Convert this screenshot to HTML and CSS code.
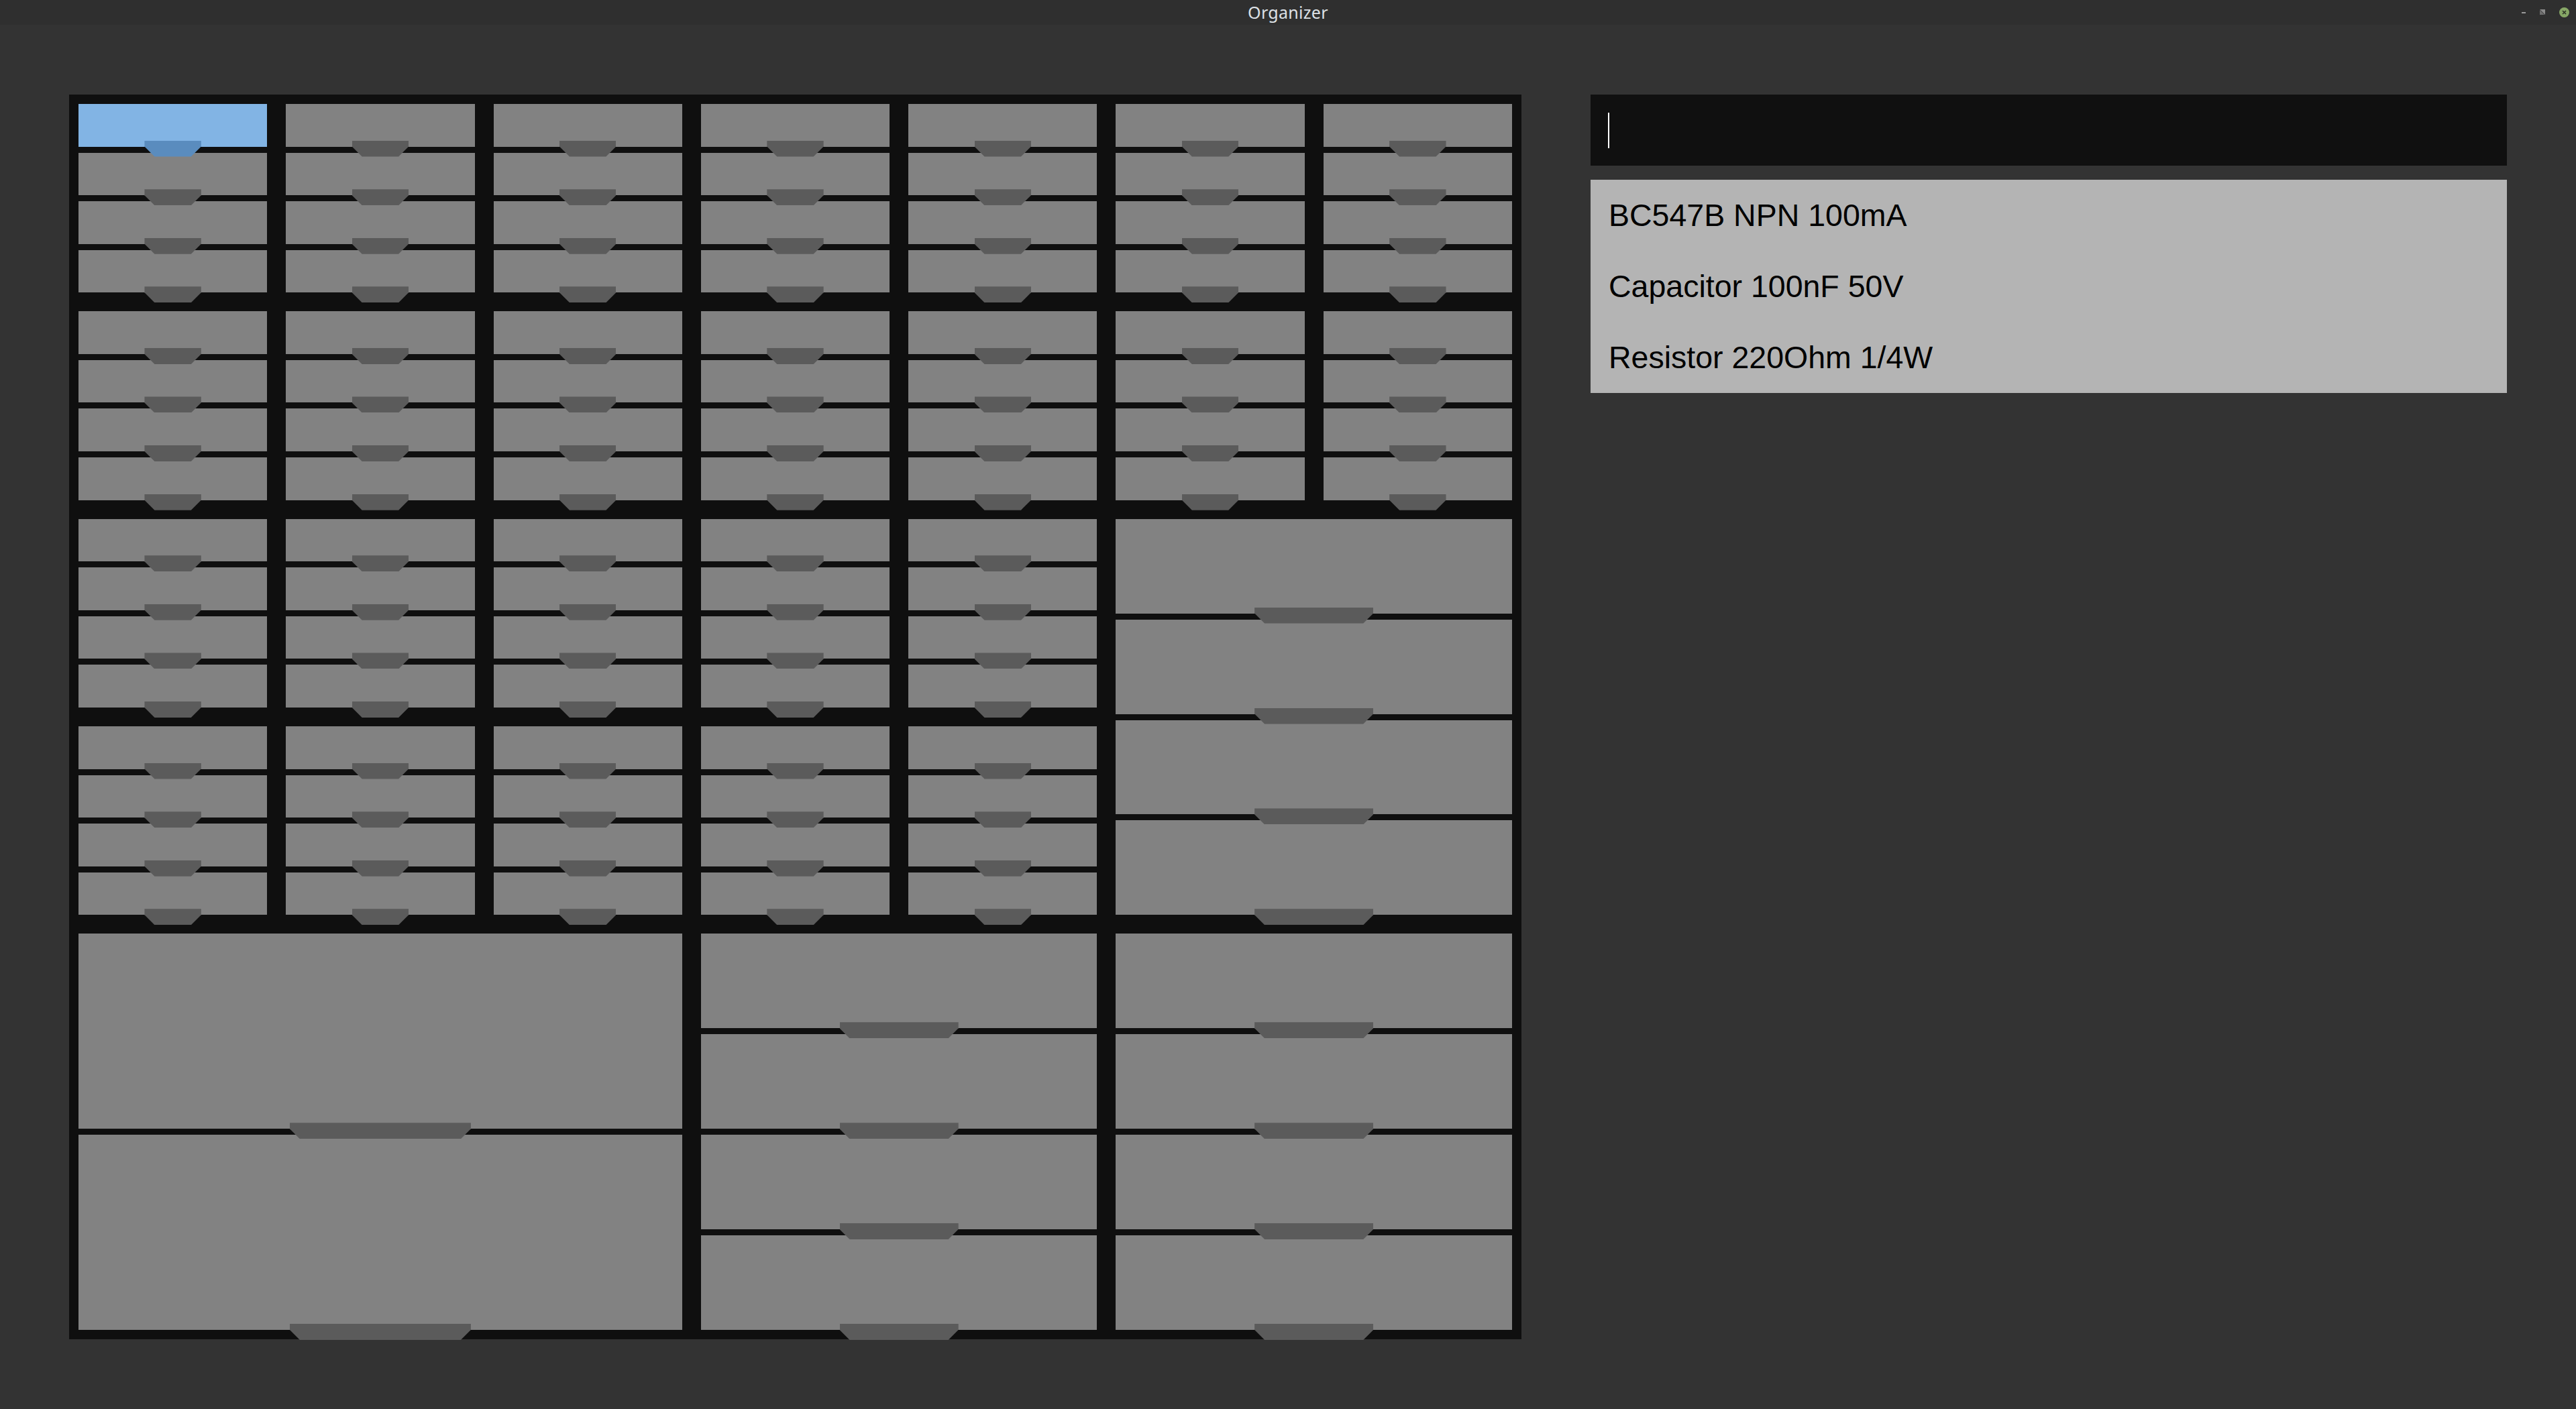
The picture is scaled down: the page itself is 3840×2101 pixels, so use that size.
FILE: index.html
```html
<!DOCTYPE html>
<html>
<head>
	<meta charset="utf-8">
	<meta name="viewport" content="width=device-width, initial-scale=1">
	<title>Organizer</title>
	<link rel="stylesheet" href="styles.css">
</head>
<body>
	<div class="titlebar">
		<span class="title">Organizer</span>
		<div class="controls">
			<span class="btn-min"></span>
			<svg class="btn-max" width="8" height="8" viewBox="0 0 8 8"><path d="M0 0H8V8Z" fill="#8a8a8a"/><path d="M0 1V8H7Z" fill="#6e6e6e"/></svg>
			<svg class="btn-close" width="15" height="15" viewBox="0 0 15 15"><circle cx="7.5" cy="7.5" r="7.5" fill="#87a766"/><path d="M5 5L10 10M10 5L5 10" stroke="#2d3327" stroke-width="1.6"/></svg>
		</div>
	</div>

	<main class="main">
		<div class="cabinet">
			<!-- row 1 -->
			<div class="cell"><div class="drawer selected"></div><div class="drawer"></div><div class="drawer"></div><div class="drawer"></div></div>
			<div class="cell"><div class="drawer"></div><div class="drawer"></div><div class="drawer"></div><div class="drawer"></div></div>
			<div class="cell"><div class="drawer"></div><div class="drawer"></div><div class="drawer"></div><div class="drawer"></div></div>
			<div class="cell"><div class="drawer"></div><div class="drawer"></div><div class="drawer"></div><div class="drawer"></div></div>
			<div class="cell"><div class="drawer"></div><div class="drawer"></div><div class="drawer"></div><div class="drawer"></div></div>
			<div class="cell"><div class="drawer"></div><div class="drawer"></div><div class="drawer"></div><div class="drawer"></div></div>
			<div class="cell"><div class="drawer"></div><div class="drawer"></div><div class="drawer"></div><div class="drawer"></div></div>
			<!-- row 2 -->
			<div class="cell"><div class="drawer"></div><div class="drawer"></div><div class="drawer"></div><div class="drawer"></div></div>
			<div class="cell"><div class="drawer"></div><div class="drawer"></div><div class="drawer"></div><div class="drawer"></div></div>
			<div class="cell"><div class="drawer"></div><div class="drawer"></div><div class="drawer"></div><div class="drawer"></div></div>
			<div class="cell"><div class="drawer"></div><div class="drawer"></div><div class="drawer"></div><div class="drawer"></div></div>
			<div class="cell"><div class="drawer"></div><div class="drawer"></div><div class="drawer"></div><div class="drawer"></div></div>
			<div class="cell"><div class="drawer"></div><div class="drawer"></div><div class="drawer"></div><div class="drawer"></div></div>
			<div class="cell"><div class="drawer"></div><div class="drawer"></div><div class="drawer"></div><div class="drawer"></div></div>
			<!-- row 3 -->
			<div class="cell"><div class="drawer"></div><div class="drawer"></div><div class="drawer"></div><div class="drawer"></div></div>
			<div class="cell"><div class="drawer"></div><div class="drawer"></div><div class="drawer"></div><div class="drawer"></div></div>
			<div class="cell"><div class="drawer"></div><div class="drawer"></div><div class="drawer"></div><div class="drawer"></div></div>
			<div class="cell"><div class="drawer"></div><div class="drawer"></div><div class="drawer"></div><div class="drawer"></div></div>
			<div class="cell"><div class="drawer"></div><div class="drawer"></div><div class="drawer"></div><div class="drawer"></div></div>
			<div class="cell span-2x2"><div class="drawer"></div><div class="drawer"></div><div class="drawer"></div><div class="drawer"></div></div>
			<!-- row 4 -->
			<div class="cell"><div class="drawer"></div><div class="drawer"></div><div class="drawer"></div><div class="drawer"></div></div>
			<div class="cell"><div class="drawer"></div><div class="drawer"></div><div class="drawer"></div><div class="drawer"></div></div>
			<div class="cell"><div class="drawer"></div><div class="drawer"></div><div class="drawer"></div><div class="drawer"></div></div>
			<div class="cell"><div class="drawer"></div><div class="drawer"></div><div class="drawer"></div><div class="drawer"></div></div>
			<div class="cell"><div class="drawer"></div><div class="drawer"></div><div class="drawer"></div><div class="drawer"></div></div>
			<!-- rows 5-6 -->
			<div class="cell span-3x2"><div class="drawer"></div><div class="drawer"></div></div>
			<div class="cell span-2x2"><div class="drawer"></div><div class="drawer"></div><div class="drawer"></div><div class="drawer"></div></div>
			<div class="cell span-2x2"><div class="drawer"></div><div class="drawer"></div><div class="drawer"></div><div class="drawer"></div></div>
		</div>

		<div class="side">
			<div class="search"><span class="caret"></span></div>
			<ul class="results">
				<li>BC547B NPN 100mA</li>
				<li>Capacitor 100nF 50V</li>
				<li>Resistor 220Ohm 1/4W</li>
			</ul>
		</div>
	</main>
</body>
</html>
```

FILE: styles.css
```css
* {
	padding: 0;
	margin: 0;
	box-sizing: border-box;
}
html, body {height: 100%;}
body {
	background: #333333;
	font-family: "Liberation Sans", Arial, sans-serif;
	display: flex;
	flex-direction: column;
}

/* window title bar */
.titlebar {
	height: 37px;
	background: #2f2f2f;
	display: flex;
	align-items: center;
	justify-content: center;
	position: relative;
}
.title {
	font-family: "Noto Sans", "Open Sans", sans-serif;
	font-size: 25px;
	letter-spacing: 0.3px;
	color: #dde1e6;
	margin-top: -1px;
}
.controls {
	position: absolute;
	right: 10px;
	top: 11px;
	display: flex;
	align-items: center;
	gap: 21px;
}
.btn-min {width: 6px; height: 2px; background: #9a9a9a;}
.btn-max {display: block; margin-top: -1px;}
.btn-close {display: block;}

/* content */
.main {
	flex: 1;
	display: flex;
	align-items: center;
	gap: 103px;
	padding: 0 103px;
}

.cabinet {
	width: 2165px;
	height: 1856px;
	background: #0f0f0f;
	padding: 14px;
	display: grid;
	grid-template-columns: repeat(7, 1fr);
	grid-template-rows: repeat(6, 1fr);
	gap: 28px;
}
.cell {
	display: flex;
	flex-direction: column;
	gap: 9px;
}
.span-2x2 {grid-column: span 2; grid-row: span 2;}
.span-3x2 {grid-column: span 3; grid-row: span 2;}

.drawer {
	flex: 1;
	background: #828282;
	position: relative;
}
.drawer::after {
	content: "";
	position: absolute;
	left: 35%;
	width: 30%;
	bottom: -15px;
	height: 24px;
	background: #5b5b5b;
	clip-path: polygon(0 0, 100% 0, 100% 9px, calc(100% - 15px) 24px, 15px 24px, 0 9px);
	z-index: 1;
}
.drawer.selected {background: #82b4e4;}
.drawer.selected::after {background: #5a8cbe;}

/* search side */
.side {
	flex: 1;
	align-self: flex-start;
	margin-top: 104px;
	display: flex;
	flex-direction: column;
	gap: 21px;
}
.search {
	height: 106px;
	background: #101010;
	display: flex;
	align-items: center;
	padding-left: 26px;
}
.caret {width: 2px; height: 53px; background: #ffffff;}

.results {
	list-style: none;
	background: #b4b4b4;
}
.results li {
	height: 106px;
	display: flex;
	align-items: center;
	padding-left: 27px;
	font-size: 46.5px;
	color: #000000;
}
```
